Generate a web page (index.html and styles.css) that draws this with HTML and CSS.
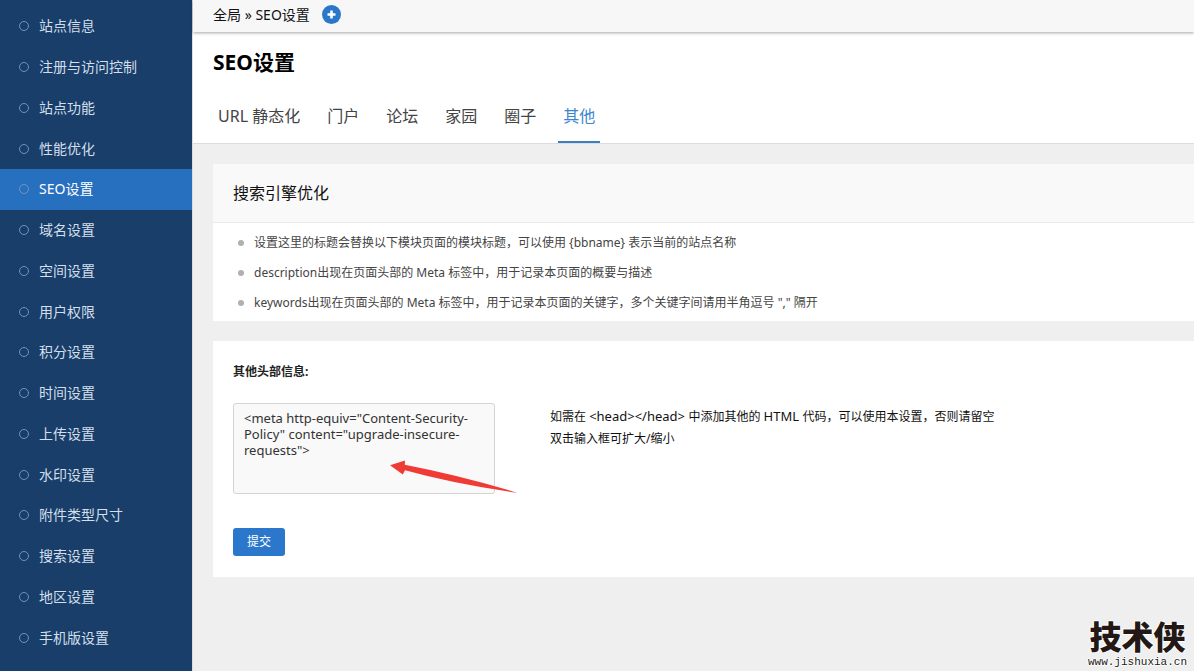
FILE: index.html
```html
<!DOCTYPE html>
<html lang="zh-CN">
<head>
<meta charset="utf-8">
<meta name="viewport" content="width=device-width, initial-scale=1">
<title>SEO设置</title>
<link rel="stylesheet" href="styles.css">
</head>
<body>
<div class="layout">
  <nav class="sidebar" aria-label="全局">
    <a class="side-link" href="#">站点信息</a>
    <a class="side-link" href="#">注册与访问控制</a>
    <a class="side-link" href="#">站点功能</a>
    <a class="side-link" href="#">性能优化</a>
    <a class="side-link side-link-active" href="#" aria-current="page">SEO设置</a>
    <a class="side-link" href="#">域名设置</a>
    <a class="side-link" href="#">空间设置</a>
    <a class="side-link" href="#">用户权限</a>
    <a class="side-link" href="#">积分设置</a>
    <a class="side-link" href="#">时间设置</a>
    <a class="side-link" href="#">上传设置</a>
    <a class="side-link" href="#">水印设置</a>
    <a class="side-link" href="#">附件类型尺寸</a>
    <a class="side-link" href="#">搜索设置</a>
    <a class="side-link" href="#">地区设置</a>
    <a class="side-link" href="#">手机版设置</a>
  </nav>
  <div class="main">
    <div class="topbar">
      <span>全局 » SEO设置</span>
      <button class="add" type="button" aria-label="添加">
        <svg viewBox="0 0 19 19" width="19" height="19"><circle cx="9.5" cy="9.5" r="9.5" fill="#2b77c9"/><path d="M9.5 5.5v8M5.5 9.5h8" stroke="#fff" stroke-width="2.6"/></svg>
      </button>
    </div>
    <header class="page-head">
      <h1 class="title">SEO设置</h1>
      <nav class="tabs" aria-label="SEO设置">
        <a class="tab" href="#">URL 静态化</a>
        <a class="tab" href="#">门户</a>
        <a class="tab" href="#">论坛</a>
        <a class="tab" href="#">家园</a>
        <a class="tab" href="#">圈子</a>
        <a class="tab tab-active" href="#">其他</a>
      </nav>
    </header>
    <main class="content">
      <section class="card">
        <h2 class="card-title">搜索引擎优化</h2>
        <ul class="tips">
          <li class="tip">设置这里的标题会替换以下模块页面的模块标题，可以使用 {bbname} 表示当前的站点名称</li>
          <li class="tip">description出现在页面头部的 Meta 标签中，用于记录本页面的概要与描述</li>
          <li class="tip">keywords出现在页面头部的 Meta 标签中，用于记录本页面的关键字，多个关键字间请用半角逗号 "," 隔开</li>
        </ul>
      </section>
      <form class="card form">
        <label class="label" for="headers">其他头部信息:</label>
        <div class="row">
          <div class="field">
            <textarea class="textarea" id="headers" spellcheck="false">&lt;meta http-equiv="Content-Security-Policy" content="upgrade-insecure-requests"&gt;</textarea>
            <svg class="arrow" viewBox="0 0 128 34" width="128" height="34" aria-hidden="true"><path d="M0 5.2 15 .6 14.8 4.8Q70 15.5 127.5 32.8 65 24 15 10.2L12.8 14.4Z" fill="#f03a35"/></svg>
          </div>
          <p class="help">如需在 <code class="code">&lt;head&gt;&lt;/head&gt; </code>中添加其他的 <code class="code">HTML </code>代码，可以使用本设置，否则请留空<br>双击输入框可扩大/缩小</p>
        </div>
        <button class="submit" type="button">提交</button>
      </form>
    </main>
  </div>
</div>
<div class="watermark">
  <span class="mark-name">技术侠</span>
  <span class="mark-url">www.jishuxia.cn</span>
</div>
</body>
</html>
```
FILE: styles.css
```css
*,
*::before {
  box-sizing: border-box;
}

body {
  margin: 0;
  background: #efefef;
  color: #111;
  font: 12px/22px "Noto Sans", "Noto Sans CJK SC", sans-serif;
}

a {
  color: inherit;
  text-decoration: none;
}

button {
  padding: 0;
  border: 0;
  font: inherit;
}

.layout {
  display: grid;
  grid-template-columns: 192px minmax(0, 1fr);
  min-height: 100vh;
}

.sidebar {
  display: flex;
  flex-direction: column;
  padding: 6px 0 13px;
  background: #183e69;
}

.side-link {
  display: flex;
  flex: 1 0 auto;
  align-items: center;
  gap: 10px;
  padding: 0 19px;
  color: #d3dfec;
  font-size: 14px;
}

.side-link::before {
  content: "";
  width: 10px;
  height: 10px;
  border: 1px solid #7593b4;
  border-radius: 50%;
}

.side-link-active {
  background: #2770bf;
  color: #fff;
}

.main {
  border-left: 1px solid #d8dde3;
}

.topbar {
  position: relative;
  display: flex;
  align-items: center;
  gap: 12px;
  height: 32px;
  padding: 0 20px 3px;
  background: #f7f7f7;
  box-shadow: 0 1px 3px rgba(0, 0, 0, 0.35);
  font-size: 14px;
}

.add {
  display: flex;
  background: none;
}

.page-head {
  padding: 15px 20px 0;
  border-bottom: 1px solid #dcdcdc;
  background: #fff;
}

.title {
  margin: 0;
  color: #000;
  font-size: 21px;
  line-height: 30px;
}

.tabs {
  display: flex;
  gap: 17px;
  padding-top: 15px;
}

.tab {
  padding: 0 5px;
  border-bottom: 2px solid transparent;
  color: #444;
  font-size: 16px;
  line-height: 49px;
}

.tab-active {
  border-color: #3b7fc0;
  color: #3b86cf;
}

.content {
  display: grid;
  gap: 20px;
  padding: 20px 0 20px 20px;
}

.card {
  background: #fff;
}

.card-title {
  margin: 0;
  padding: 0 20px;
  border-bottom: 1px solid #e9e9e9;
  background: #f9f9f9;
  font-size: 16px;
  font-weight: 400;
  line-height: 58px;
}

.tips {
  margin: 0;
  padding: 5px 25px 3px;
  list-style: none;
}

.tip {
  display: flex;
  align-items: center;
  gap: 10px;
  color: #444;
  line-height: 30px;
}

.tip::before {
  content: "";
  flex: none;
  width: 6px;
  height: 6px;
  border-radius: 50%;
  background: #b0b0b0;
}

.form {
  padding: 20px 20px 21px;
}

.label {
  display: block;
  color: #222;
  font-weight: 700;
}

.row {
  display: flex;
  gap: 55px;
  padding: 20px 0 34px;
}

.field {
  position: relative;
  flex: none;
}

.textarea {
  display: block;
  width: 262px;
  height: 91px;
  padding: 6px 10px;
  border: 1px solid #d5d5d5;
  border-radius: 3px;
  background: #f9f9f9;
  color: #333;
  font: inherit;
  font-size: 13px;
  line-height: 16px;
  resize: none;
}

.arrow {
  position: absolute;
  top: 57px;
  left: 157px;
}

.help {
  margin: 2px 0 0;
}

.code {
  font-family: inherit;
  font-size: 13px;
}

.submit {
  display: block;
  padding: 3px 14px;
  border-radius: 3px;
  background: #2b77cc;
  color: #fff;
}

.watermark {
  position: absolute;
  right: 7px;
  bottom: 3px;
  display: grid;
  justify-items: center;
  color: #231815;
  text-shadow: 1px 0 #fff, -1px 0 #fff, 0 1px #fff, 0 -1px #fff;
}

.mark-name {
  font: 900 32px/42px "Noto Sans CJK SC", sans-serif;
}

.mark-url {
  font: 11px/12px "Liberation Mono", monospace;
}
```
